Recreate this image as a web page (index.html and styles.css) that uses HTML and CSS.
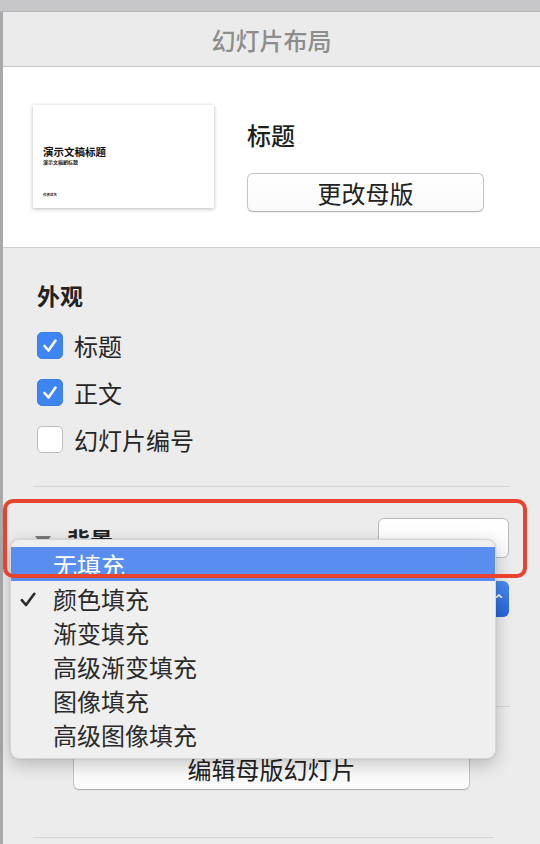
FILE: index.html
```html
<!DOCTYPE html>
<html lang="zh-CN">
<head>
<meta charset="utf-8">
<link rel="stylesheet" href="styles.css">
</head>
<body>
<div class="topbar"></div>
<div class="panel">
  <div class="header">幻灯片布局</div>
  <div class="layout-section">
    <div class="thumb">
      <div class="thumb-title">演示文稿标题</div>
      <div class="thumb-sub">演示文稿副标题</div>
      <div class="thumb-foot">作者姓名</div>
    </div>
    <div class="layout-info">
      <div class="layout-name">标题</div>
      <div class="btn change-btn">更改母版</div>
    </div>
  </div>
  <div class="gray-section">
    <div class="section-title">外观</div>
    <div class="check-row">
      <span class="checkbox on"><svg viewBox="0 0 26 27" width="26" height="27"><path d="M7.5 14 L11.5 18.5 L18.5 8.5" fill="none" stroke="#fff" stroke-width="2.6" stroke-linecap="round" stroke-linejoin="round"/></svg></span>
      <span class="check-label">标题</span>
    </div>
    <div class="check-row">
      <span class="checkbox on"><svg viewBox="0 0 26 27" width="26" height="27"><path d="M7.5 14 L11.5 18.5 L18.5 8.5" fill="none" stroke="#fff" stroke-width="2.6" stroke-linecap="round" stroke-linejoin="round"/></svg></span>
      <span class="check-label">正文</span>
    </div>
    <div class="check-row">
      <span class="checkbox"></span>
      <span class="check-label">幻灯片编号</span>
    </div>
    <div class="sep sep-a"></div>
    <div class="bg-row">
      <div class="bg-title"><span class="tri"></span><span class="bg-label">背景</span></div>
      <div class="color-well"></div>
    </div>
    <div class="popup-row">
      <div class="popup-btn"><span class="chev">⌃</span></div>
    </div>
    <div class="sep sep-b"></div>
    <div class="btn edit-btn">编辑母版幻灯片</div>
    <div class="sep sep-c"></div>
  </div>
</div>

<div class="menu">
  <div class="menu-item active">无填充</div>
  <div class="menu-item checked"><svg class="tick" viewBox="0 0 16 15" width="16" height="15"><path d="M1.8 8.2 L6 13 L14.3 1.8" fill="none" stroke="#2a2a2a" stroke-width="2.6" stroke-linecap="round" stroke-linejoin="round"/></svg>颜色填充</div>
  <div class="menu-item">渐变填充</div>
  <div class="menu-item">高级渐变填充</div>
  <div class="menu-item">图像填充</div>
  <div class="menu-item">高级图像填充</div>
</div>
<div class="highlight"></div>
</body>
</html>
```
FILE: styles.css
```css
html, body {
  margin: 0;
  padding: 0;
}
body {
  width: 540px;
  height: 844px;
  overflow: hidden;
  position: relative;
  background: #ececec;
  font-family: "Noto Sans CJK SC", "Noto Sans", sans-serif;
  color: #262626;
}
.topbar {
  height: 11px;
  background: #c7c7c9;
  border-bottom: 1px solid #b3b3b5;
}
.panel {
  border-left: 3px solid #a9a9ab;
  height: 832px;
  box-sizing: border-box;
}
.header {
  height: 54px;
  background: #ebebeb;
  border-bottom: 1px solid #c6c6c6;
  display: flex;
  align-items: center;
  justify-content: center;
  font-size: 24px;
  font-weight: 500;
  color: #8d8d8d;
}
.layout-section {
  height: 181px;
  background: #fff;
  border-bottom: 1px solid #cfcfcf;
  box-sizing: border-box;
  display: flex;
  align-items: flex-start;
  padding: 38px 0 0 30px;
  gap: 33px;
}
.thumb {
  width: 181px;
  height: 103px;
  background: #fff;
  box-shadow: 0 1px 4px rgba(0,0,0,0.28);
  box-sizing: border-box;
  padding: 40px 0 0 10px;
  display: flex;
  flex-direction: column;
}
.thumb-title {
  font-size: 10.5px;
  line-height: 13px;
  font-weight: 700;
  color: #111;
}
.thumb-sub {
  font-size: 5px;
  line-height: 8px;
  font-weight: 700;
  color: #222;
}
.thumb-foot {
  font-size: 3.5px;
  line-height: 5px;
  margin-top: 26px;
  color: #333;
  font-weight: 700;
}
.layout-info {
  padding-top: 15px;
  display: flex;
  flex-direction: column;
}
.layout-name {
  font-size: 24px;
  line-height: 30px;
  font-weight: 500;
  color: #1e1e1e;
}
.btn {
  background: linear-gradient(#ffffff, #fafafa);
  border: 1px solid #c4c4c4;
  border-bottom-color: #b4b4b4;
  border-radius: 6px;
  box-sizing: border-box;
  display: flex;
  align-items: center;
  justify-content: center;
  font-size: 24px;
  color: #222;
  box-shadow: 0 1px 1px rgba(0,0,0,0.06);
}
.change-btn {
  margin-top: 23px;
  width: 237px;
  height: 39px;
}
.gray-section {
  padding: 32px 30px 0 30px;
}
.section-title {
  font-size: 23px;
  line-height: 30px;
  font-weight: 700;
  color: #222;
  padding-left: 4px;
  margin-bottom: 12px;
}
.check-row {
  height: 47px;
  display: flex;
  align-items: center;
  padding-left: 4px;
}
.checkbox {
  width: 26px;
  height: 27px;
  box-sizing: border-box;
  border-radius: 5px;
  background: #fff;
  border: 1px solid #bdbdbd;
  display: flex;
}
.checkbox.on {
  background: #3e84f2;
  border-color: #3a7ee8;
}
.checkbox svg {
  display: block;
  margin: -1px;
}
.check-label {
  margin-left: 11px;
  font-size: 24px;
  line-height: 30px;
  color: #262626;
}
.sep {
  height: 1px;
  background: #d3d3d3;
}
.sep-a { margin-top: 23px; }
.bg-row {
  margin-top: 31px;
  height: 40px;
  display: flex;
  align-items: center;
  justify-content: space-between;
}
.bg-title {
  display: flex;
  align-items: center;
  padding-left: 2px;
}
.tri {
  width: 0;
  height: 0;
  border-left: 8px solid transparent;
  border-right: 8px solid transparent;
  border-top: 11px solid #7a7a7a;
  margin-top: 6px;
}
.bg-label {
  margin-left: 16px;
  font-size: 23px;
  font-weight: 700;
  color: #222;
  line-height: 30px;
  margin-top: 2px;
}
.color-well {
  width: 131px;
  height: 40px;
  box-sizing: border-box;
  background: linear-gradient(#fff, #fafafa);
  border: 1px solid #b9b9b9;
  border-radius: 6px;
  margin-right: 1px;
}
.popup-row {
  margin-top: 23px;
  height: 36px;
  display: flex;
  justify-content: flex-end;
}
.popup-btn {
  width: 131px;
  height: 36px;
  margin-right: 1px;
  border-radius: 6px;
  background: linear-gradient(#4a8cf2, #2762d9);
  display: flex;
  align-items: center;
  justify-content: flex-end;
  padding-right: 4px;
  box-sizing: border-box;
  color: #fff;
  font-size: 16px;
}
.sep-b { margin-top: 89px; }
.edit-btn {
  margin: 39px auto 0 auto;
  width: 397px;
  height: 44px;
}
.sep-c { margin-top: 47px; margin-right: 16px; }

.menu {
  position: absolute;
  left: 10px;
  top: 539px;
  width: 486px;
  height: 220px;
  box-sizing: border-box;
  padding-top: 7px;
  background: #efefef;
  border: 1px solid #d6d6d6;
  border-radius: 9px;
  box-shadow: 0 6px 18px rgba(0,0,0,0.22), 0 0 2px rgba(0,0,0,0.15);
}
.menu-item {
  height: 34px;
  line-height: 36px;
  padding-left: 42px;
  font-size: 24px;
  color: #2a2a2a;
  position: relative;
}
.menu-item.active {
  background: #5a8eee;
  color: #fff;
}
.tick {
  position: absolute;
  left: 9px;
  top: 11px;
}
.highlight {
  position: absolute;
  left: 3px;
  top: 499px;
  width: 524px;
  height: 79px;
  box-sizing: border-box;
  border: 4px solid #e7432f;
  border-radius: 10px;
}
```
